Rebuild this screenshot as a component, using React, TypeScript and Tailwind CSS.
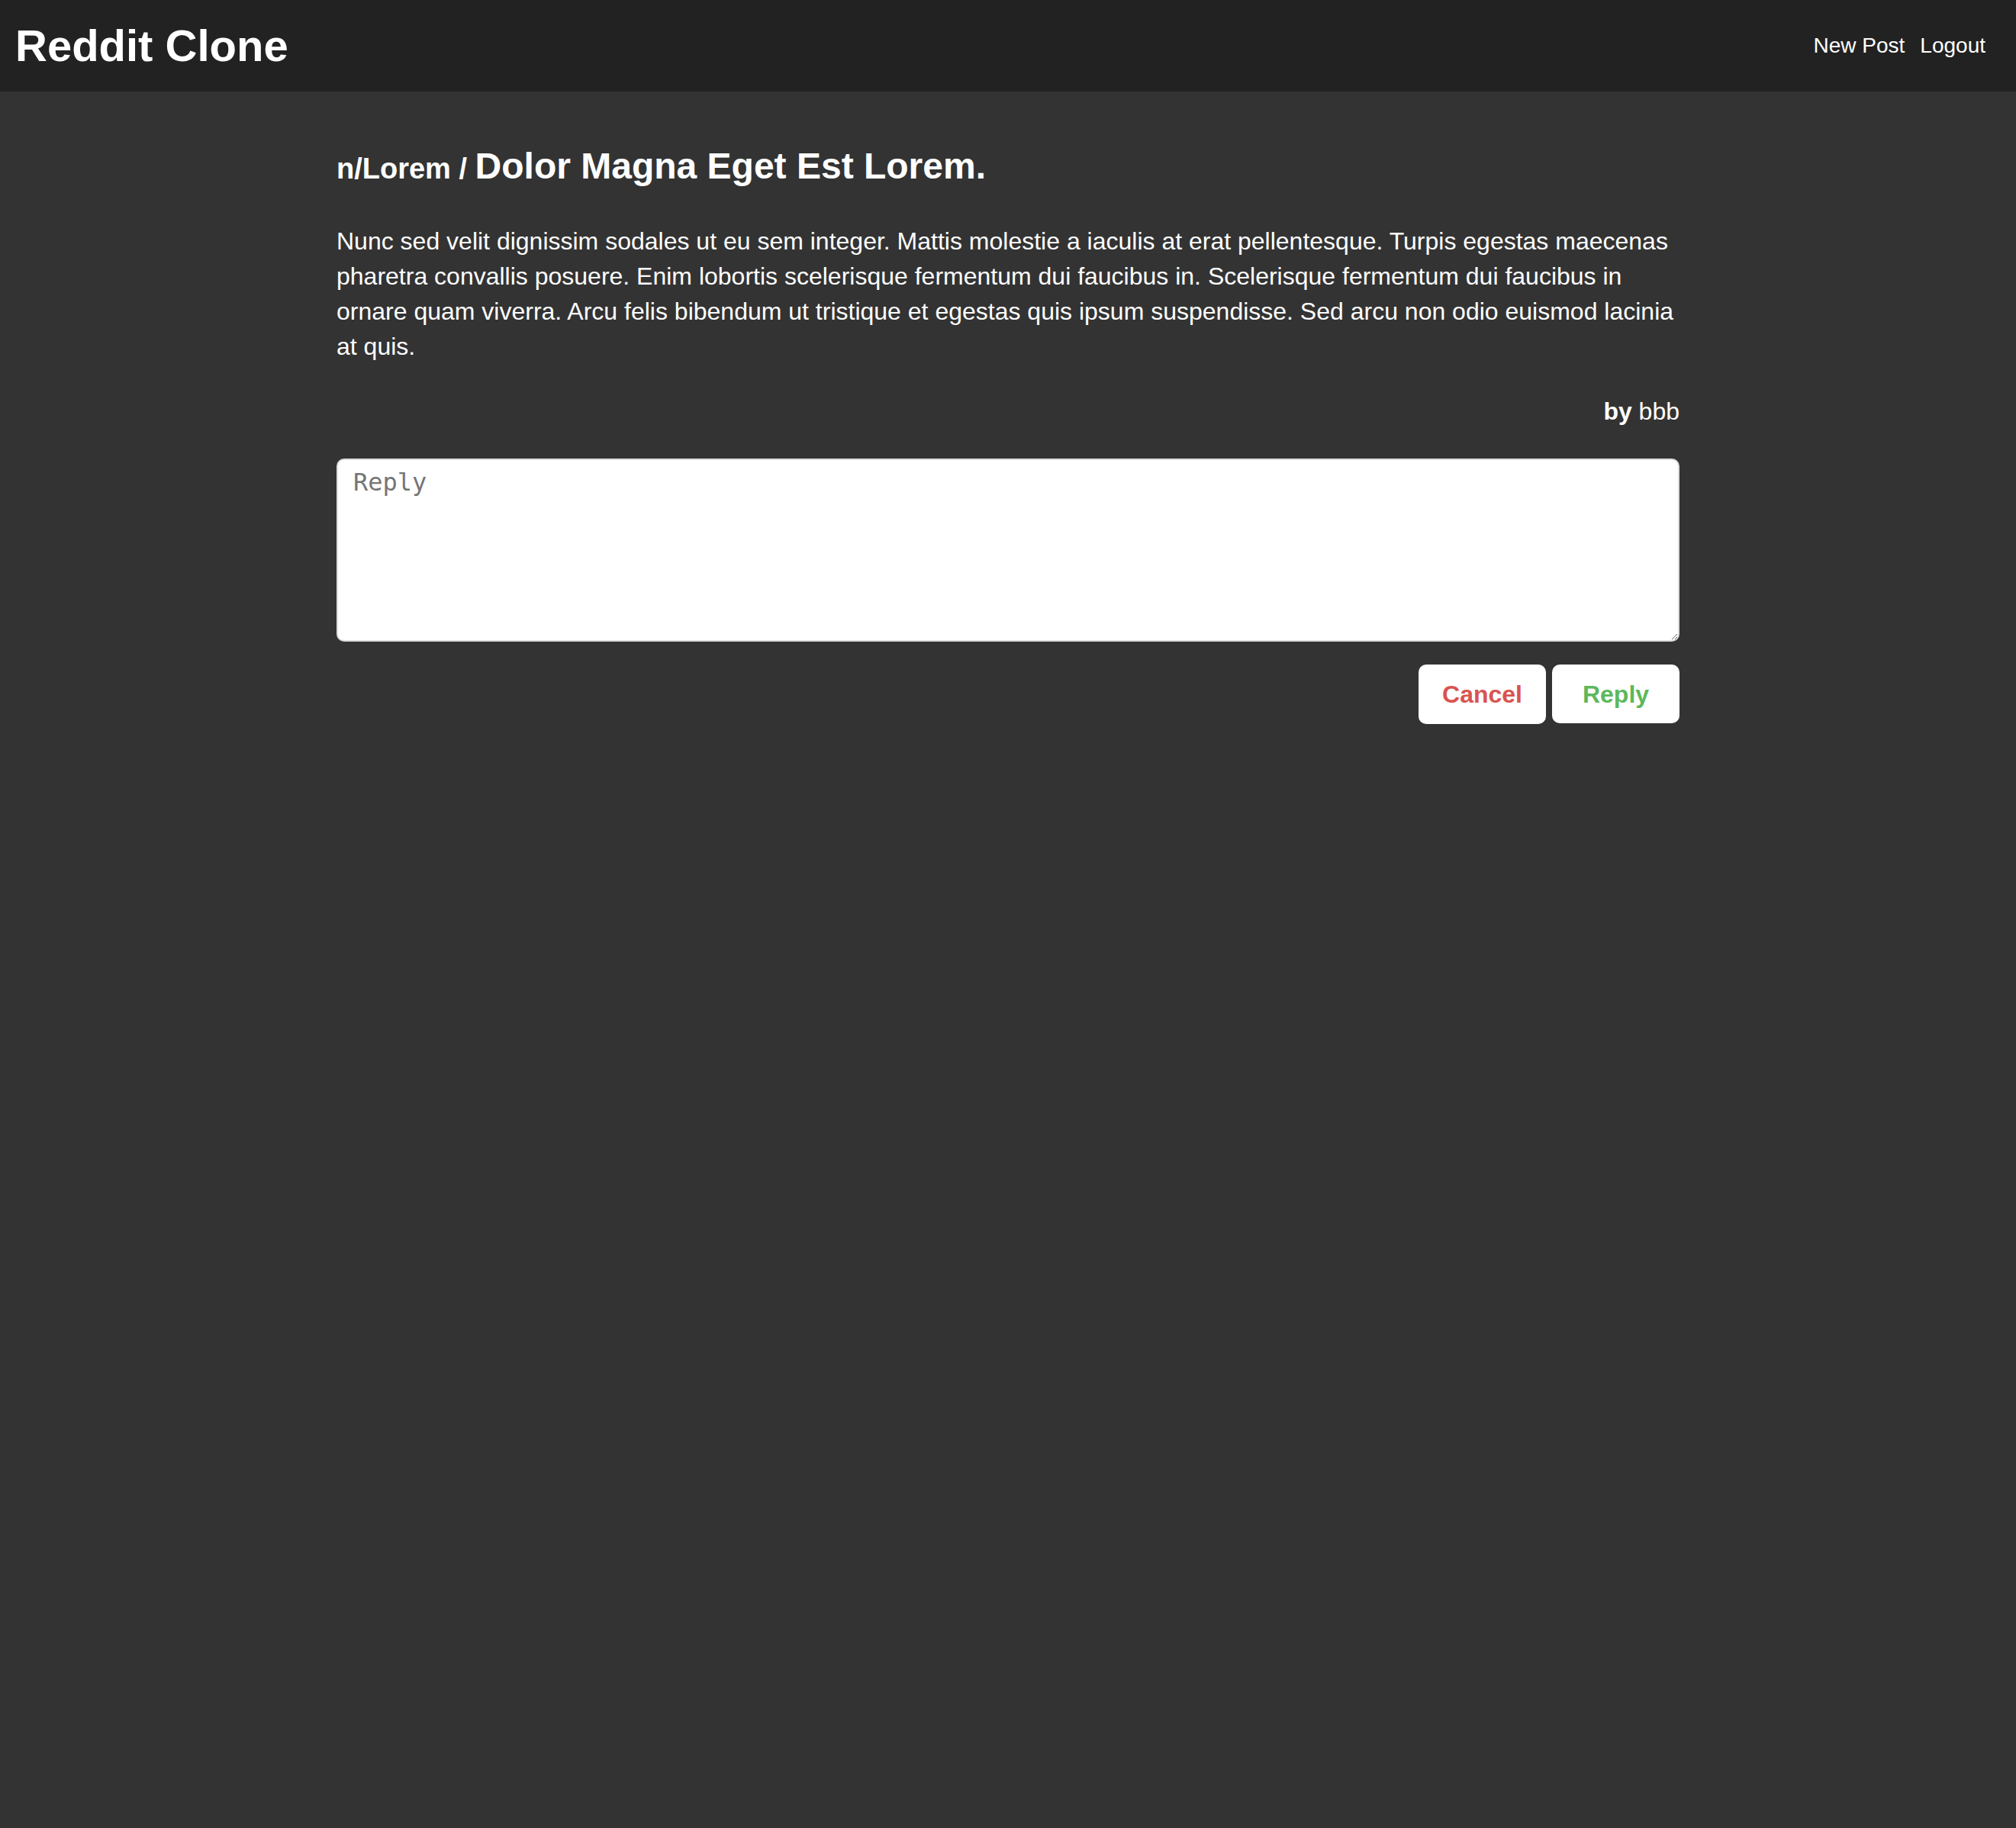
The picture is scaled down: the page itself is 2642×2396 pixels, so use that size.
export default function App() {
  return (
    <div className="min-h-screen bg-[#333333] font-['Liberation_Sans',Arial,sans-serif] text-[32px] leading-[46px] text-white">
      <header className="flex h-[120px] items-center justify-between bg-[#222222] pr-10 pl-5">
        <h1 className="text-[58px] leading-[64px] font-bold">
          <a href="#">Reddit Clone</a>
        </h1>
        <nav className="flex gap-5 text-[28px] leading-[42px]">
          <a href="#new">New Post</a>
          <a href="#logout">Logout</a>
        </nav>
      </header>
      <main className="mx-auto w-full max-w-[1760px] pt-[70px]">
        <h2 className="text-[48px] leading-[56px] font-bold">
          <a href="#lorem" className="text-[38px]">n/Lorem / </a>
          Dolor Magna Eget Est Lorem.
        </h2>
        <p className="mt-11">
          Nunc sed velit dignissim sodales ut eu sem integer. Mattis molestie a iaculis at erat pellentesque. Turpis
          egestas maecenas pharetra convallis posuere. Enim lobortis scelerisque fermentum dui faucibus in. Scelerisque
          fermentum dui faucibus in ornare quam viverra. Arcu felis bibendum ut tristique et egestas quis ipsum
          suspendisse. Sed arcu non odio euismod lacinia at quis.
        </p>
        <p className="mt-[39px] text-right">
          <strong>by</strong> bbb
        </p>
        <form className="mt-[39px]">
          <textarea
            aria-label="Reply"
            placeholder="Reply"
            className="block h-60 w-full resize-y rounded-[10px] border-2 border-[#dddddd] bg-white px-5 py-2.5 font-['DejaVu_Sans_Mono',monospace] text-[32px] leading-[38px] text-[#333333] placeholder:text-[#757575]"
          />
          <div className="mt-[30px] flex justify-end gap-2 font-bold">
            <button type="button" className="h-[78px] w-[167px] rounded-[10px] bg-white text-[#d9534f]">
              Cancel
            </button>
            <button type="submit" className="h-[77px] w-[167px] rounded-[10px] bg-white text-[#5cb85c]">
              Reply
            </button>
          </div>
        </form>
      </main>
    </div>
  );
}
